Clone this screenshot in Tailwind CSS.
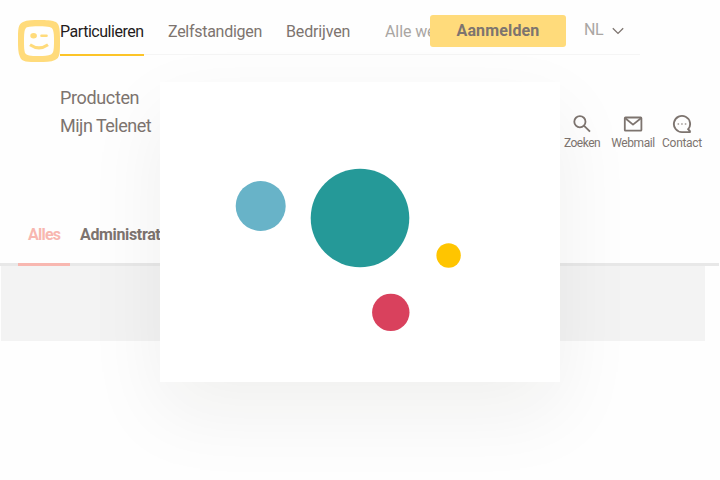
<!DOCTYPE html>
<html lang="nl">
<head>
<meta charset="utf-8">
<title>Telenet</title>
<script src="https://cdn.jsdelivr.net/npm/@tailwindcss/browser@4"></script>
</head>
<body class="bg-[#fefefe] font-['Roboto','Liberation_Sans',sans-serif] text-[#7d746f]">
<div class="relative h-[480px] w-[720px] overflow-hidden">
  <header class="flex h-[216px] pl-[18px]">
    <svg class="mt-5 h-[42px] w-[42px] shrink-0" viewBox="0 0 42 42" fill="none">
      <path d="M21 0C37 0 39 2 40.500 5C42 9 42 15 42 21C42 33 42 38 37 40C33 42 27 42 21 42C9 42 4 42 2 37C0 33 0 27 0 21C0 9 0 4 5 2C9 0 15 0 21 0Z" fill="#ffdb7b"/>
      <path d="M21 6.300C31 6.300 34 7 35 10C36 13 36 17 36 21C36 30 35.500 33 33 34.500C30 36 26 36 21 36C12 36 8.500 35.500 7 33C6 30 6 26 6 21C6 12 6.500 8.500 9 7.300C12 6.300 16 6.300 21 6.300Z" fill="#fefefe"/>
      <ellipse cx="15.600" cy="15.800" rx="3.300" ry="2.700" fill="#ffdb7b"/>
      <path d="M23.500 15.800h5" stroke="#ffdb7b" stroke-width="2.600" stroke-linecap="round"/>
      <path d="M12 24.800Q21 31 30 24.800" stroke="#ffdb7b" stroke-width="3"/>
    </svg>
    <div class="flex w-[660px] flex-col">
      <div class="flex h-14 w-[660px]">
        <nav class="flex h-[55px] w-[580px] shrink-0 border-b border-[#f5f5f5] text-[16px] leading-[22px] whitespace-nowrap">
          <a class="mr-6 h-14 w-[84px] border-b-2 border-[#fcc428] pt-[21px] tracking-[-0.46px] text-[#241b1b]">Particulieren</a>
          <a class="mr-6 w-[94px] pt-[21px] tracking-[-0.28px]">Zelfstandigen</a>
          <a class="w-[64px] pt-[21px] tracking-[-0.15px]">Bedrijven</a>
          <a class="ml-[35px] w-[45px] overflow-hidden pt-[21px] tracking-[-0.1px] text-[#aaa6a3]">Alle we</a>
          <button class="mt-[15px] h-8 w-[136px] shrink-0 rounded-[3px] bg-[#ffdb7b] text-[16px] font-bold tracking-[0.15px]">Aanmelden</button>
          <div class="ml-[18px] flex shrink-0 items-start pt-[19px] text-[#aaa6a3]">
            <span class="w-7 tracking-[-0.3px]">NL</span>
            <svg class="mt-[8px] h-2 w-3" viewBox="0 0 12 8" fill="none" stroke="#7d746f" stroke-width="1.300"><path d="M.800 1.200L6 6.400L11.200 1.200"/></svg>
          </div>
        </nav>
      </div>
      <div class="flex">
        <nav class="mt-7 flex w-[504px] flex-col text-[18px] leading-7">
          <a class="tracking-[-0.36px]">Producten</a>
          <a class="tracking-[-0.5px]">Mijn Telenet</a>
        </nav>
        <div class="mt-[58px] flex text-[12px] leading-[14px] whitespace-nowrap">
          <a class="mr-[11px] flex w-[36px] flex-col items-center gap-[2px] tracking-[-0.5px]">
            <svg class="h-5 w-5" viewBox="0 0 20 20" fill="none" stroke="#7d746f" stroke-width="1.800"><circle cx="7.900" cy="7.700" r="5.600"/><path d="M11.900 11.600L18 17.700"/></svg>
            <span>Zoeken</span>
          </a>
          <a class="mr-[7px] flex w-[44px] flex-col items-center gap-[2px] tracking-[-0.4px]">
            <svg class="h-5 w-5" viewBox="0 0 20 20" fill="none" stroke="#7d746f" stroke-width="1.800" stroke-linejoin="round"><rect x="1.800" y="3.500" width="16.600" height="13.200" rx=".700"/><path d="M2.300 4.200L10 10.600L17.900 4.200"/></svg>
            <span>Webmail</span>
          </a>
          <a class="flex w-[40px] flex-col items-center gap-[2px] tracking-[-0.3px]">
            <svg class="h-5 w-5" viewBox="0 0 20 20" fill="none" stroke="#7d746f" stroke-width="1.900"><path d="M18.700 18.100H10A8.100 8.100 0 1 1 16.200 15.200L18.500 17.800"/><path d="M5.600 10h1.500M9.200 10h1.500M12.800 10h1.500" stroke-width="1.500" opacity=".75"/></svg>
            <span>Contact</span>
          </a>
        </div>
      </div>
    </div>
  </header>
  <nav class="flex h-[50px] w-[719px] border-b-[3px] border-[#e8e8e8] pl-[18px] text-[16px] leading-[22px] font-bold whitespace-nowrap">
    <a class="h-[50px] w-[52px] shrink-0 border-b-[3px] border-[#f8b7b0] pt-[8px] pl-[10px] tracking-[-0.75px] text-[#f8b7b0]">Alles</a>
    <a class="pt-[8px] pl-[10px] tracking-[-0.35px]">Administrat</a>
  </nav>
  <section class="ml-px h-[75px] w-[704px] bg-[#f3f3f3]"></section>
  <div class="absolute top-[82px] left-[160px] h-[300px] w-[400px] bg-white shadow-[0_30px_74px_rgba(30,25,18,0.062)]">
    <svg class="h-[300px] w-[400px]" viewBox="160 82 400 300">
      <circle cx="260.700" cy="206" r="25" fill="#68b3c8"/>
      <circle cx="360" cy="218" r="49.300" fill="#259998"/>
      <circle cx="448.600" cy="255.500" r="12.200" fill="#ffc500"/>
      <circle cx="390.800" cy="312.400" r="18.700" fill="#d9415d"/>
    </svg>
  </div>
</div>
</body>
</html>
